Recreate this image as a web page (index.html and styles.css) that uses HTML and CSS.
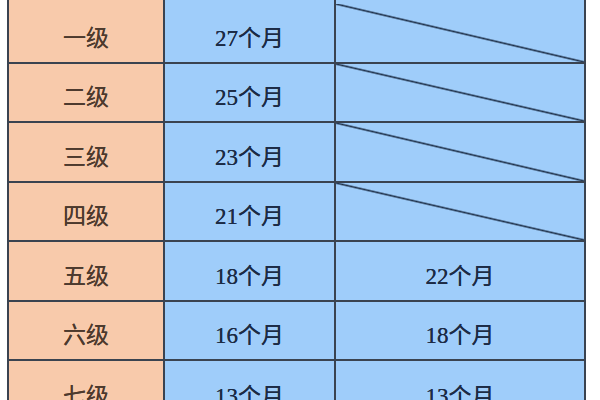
FILE: index.html
```html
<!DOCTYPE html>
<html lang="zh-CN">
<head>
<meta charset="utf-8">
<title>晋升年限表</title>
<link rel="stylesheet" href="styles.css">
</head>
<body>
<div class="table">
  <div class="cell lvl"></div><div class="cell mon"></div><div class="cell mon"></div>
  <div class="cell lvl">一级</div><div class="cell mon">27个月</div><div class="cell mon diag"></div>
  <div class="cell lvl">二级</div><div class="cell mon">25个月</div><div class="cell mon diag"></div>
  <div class="cell lvl">三级</div><div class="cell mon">23个月</div><div class="cell mon diag"></div>
  <div class="cell lvl">四级</div><div class="cell mon">21个月</div><div class="cell mon diag"></div>
  <div class="cell lvl">五级</div><div class="cell mon">18个月</div><div class="cell mon">22个月</div>
  <div class="cell lvl">六级</div><div class="cell mon">16个月</div><div class="cell mon">18个月</div>
  <div class="cell lvl">七级</div><div class="cell mon">13个月</div><div class="cell mon">13个月</div>
</div>
</body>
</html>
```
FILE: styles.css
```css
html, body {
  margin: 0;
  padding: 0;
  background: #ffffff;
  overflow: hidden;
}
body {
  width: 600px;
  height: 400px;
}
.table {
  margin-left: 7px;
  width: 575px;
  display: grid;
  grid-template-columns: 154px 169px 248px;
  grid-template-rows: 2px 58px 57px 58px 57px 58px 57px 60px;
  gap: 2px;
  padding: 0 2px;
  background: #3a4350;
  font-family: "Liberation Serif", "Noto Sans CJK SC", serif;
  font-size: 23px;
}
.cell {
  display: flex;
  align-items: center;
  justify-content: center;
  padding-top: 5px;
  box-sizing: border-box;
  overflow: hidden;
}
.lvl {
  background: #f8caab;
  color: #4d3a2e;
  text-shadow: 0 0 0.6px #4d3a2e;
}
.mon {
  background: #9fcdfa;
  color: #1c2b45;
  text-shadow: 0 0 0.6px #1c2b45;
}
.diag {
  background: linear-gradient(to top right, #9fcdfa calc(50% - 1.6px), #1e3049 50%, #9fcdfa calc(50% + 1.6px));
}
```
